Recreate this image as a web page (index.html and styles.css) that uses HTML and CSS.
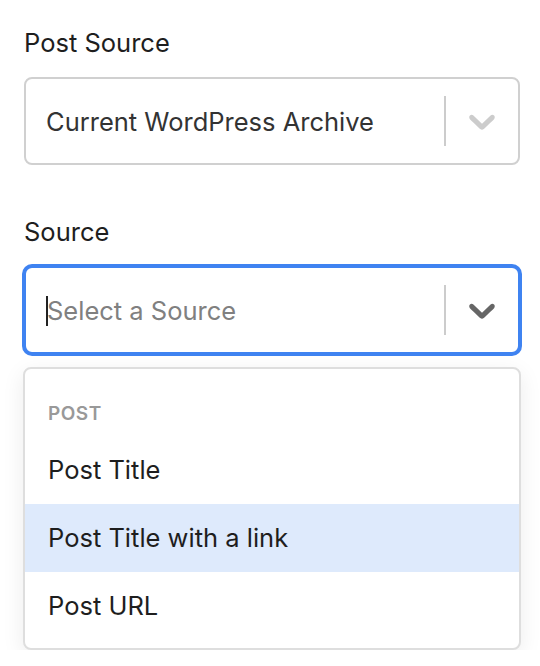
FILE: index.html
```html
<!DOCTYPE HTML>
<html>

<head>
    <title>Post Source</title>
    <meta name="viewport" content="width=device-width, initial-scale=1">
    <link rel="stylesheet" href="styles.css">
</head>

<body>
    <div class="panel">
        <div class="field">
            <label class="field-label">Post Source</label>
            <div class="select">
                <div class="select-value">Current WordPress Archive</div>
                <span class="select-sep"></span>
                <div class="select-arrow">
                    <svg viewBox="0 0 20 20" width="44" height="44" aria-hidden="true">
                        <path d="M4.516 7.548c0.436-0.446 1.043-0.481 1.576 0l3.908 3.747 3.908-3.747c0.533-0.481 1.141-0.446 1.574 0 0.436 0.445 0.408 1.197 0 1.615-0.406 0.418-4.695 4.502-4.695 4.502-0.217 0.223-0.502 0.335-0.787 0.335s-0.57-0.112-0.789-0.335c0 0-4.287-4.084-4.695-4.502s-0.436-1.170 0-1.615z"></path>
                    </svg>
                </div>
            </div>
        </div>

        <div class="field field-source">
            <label class="field-label">Source</label>
            <div class="select select-focused">
                <div class="select-value select-placeholder"><span class="caret"></span>Select a Source</div>
                <span class="select-sep"></span>
                <div class="select-arrow">
                    <svg viewBox="0 0 20 20" width="44" height="44" aria-hidden="true">
                        <path d="M4.516 7.548c0.436-0.446 1.043-0.481 1.576 0l3.908 3.747 3.908-3.747c0.533-0.481 1.141-0.446 1.574 0 0.436 0.445 0.408 1.197 0 1.615-0.406 0.418-4.695 4.502-4.695 4.502-0.217 0.223-0.502 0.335-0.787 0.335s-0.57-0.112-0.789-0.335c0 0-4.287-4.084-4.695-4.502s-0.436-1.170 0-1.615z"></path>
                    </svg>
                </div>
            </div>
            <div class="menu">
                <div class="menu-group">POST</div>
                <div class="menu-option">Post Title</div>
                <div class="menu-option menu-option-active">Post Title with a link</div>
                <div class="menu-option">Post URL</div>
            </div>
        </div>
    </div>
</body>

</html>
```

FILE: styles.css
```css
html {
    font-family: Inter, "Noto Sans", sans-serif;
}

body {
    margin: 0;
    color: #1e1e1e;
}

.panel {
    width: 496px;
    padding: 28px 0 0 24px;
}

.field-label {
    display: block;
    font-size: 25.5px;
    line-height: 30px;
    margin-bottom: 19px;
}

.field-source {
    margin-top: 52px;
}

.select {
    display: flex;
    align-items: center;
    box-sizing: border-box;
    height: 88px;
    border: 2px solid #d0d0d0;
    border-radius: 8px;
    background-color: #fff;
}

.select-focused {
    border-color: #3f83f1;
    box-shadow: 0 0 0 2px #3f83f1;
}

.select-value {
    flex: 1;
    padding-left: 20px;
    font-size: 25.5px;
    color: #333;
    white-space: nowrap;
}

.select-placeholder {
    color: #808080;
}

.caret {
    display: inline-block;
    width: 2px;
    height: 30px;
    margin-right: -1px;
    vertical-align: -6px;
    background-color: #222;
}

.select-sep {
    align-self: stretch;
    width: 2px;
    margin: 17px 0;
    background-color: #ccc;
}

.select-arrow {
    display: flex;
    align-items: center;
    justify-content: center;
    width: 72px;
    fill: #ccc;
}

.select-focused .select-arrow {
    fill: #666;
}

.menu {
    margin: 13px -1px 0;
    padding: 8px 0;
    border: 2px solid #dedede;
    border-radius: 8px;
    background-color: #fff;
    box-shadow: 0 6px 22px rgba(0, 0, 0, .08);
}

.menu-group {
    padding: 27px 23px 13px;
    font-size: 19px;
    line-height: 19px;
    font-weight: 600;
    color: #999;
    letter-spacing: .5px;
}

.menu-option {
    height: 68px;
    padding: 0 23px;
    font-size: 25.5px;
    line-height: 68px;
    color: #1e1e1e;
}

.menu-option-active {
    background-color: #deeafc;
}
```
